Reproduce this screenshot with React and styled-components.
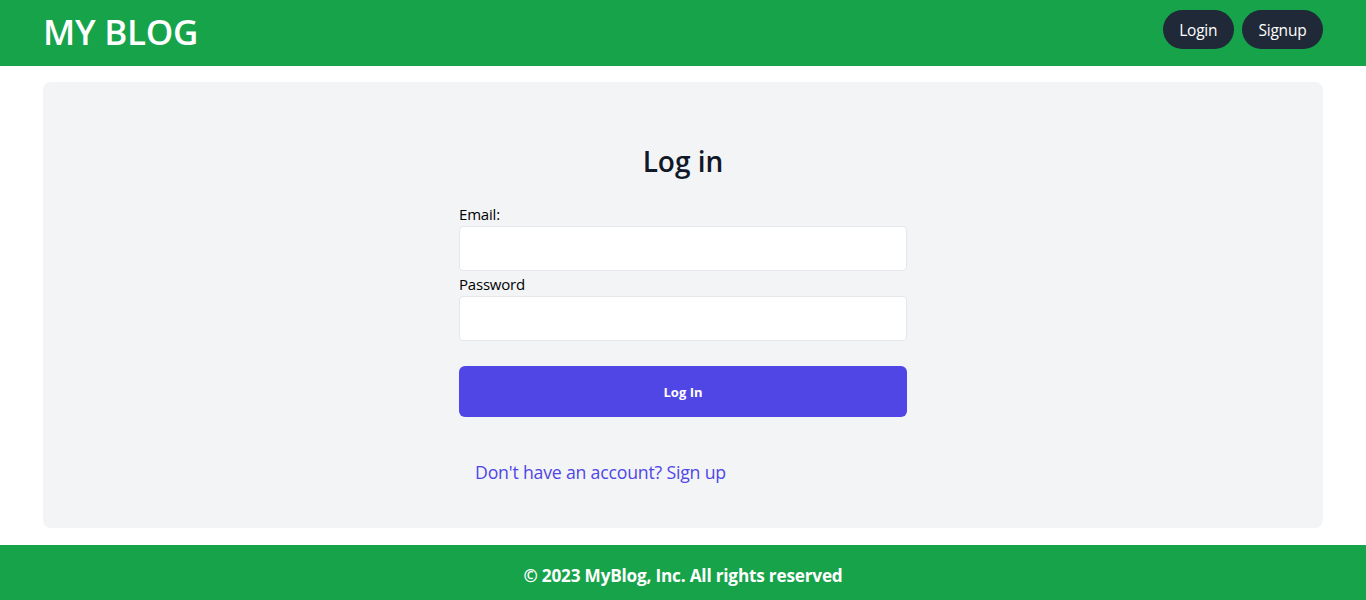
import React from "react";
import styled, { createGlobalStyle } from "styled-components";

const Global = createGlobalStyle`
  * { box-sizing: border-box; }
  html, body { margin: 0; padding: 0; background: #ffffff; }
  body { font-family: "Open Sans", "Noto Sans", sans-serif; color: #000; }
`;

const Page = styled.div`
  display: flex;
  flex-direction: column;
  min-height: 600px;
`;

const Header = styled.header`
  background: #16a34a;
  height: 66px;
  padding-top: 10px;
`;

const Container = styled.div`
  max-width: 1280px;
  margin: 0 auto;
  display: flex;
  align-items: flex-start;
  justify-content: space-between;
`;

const Brand = styled.h1`
  margin: 2px 0 0;
  color: #ffffff;
  font-size: 35px;
  font-weight: 600;
  letter-spacing: -0.3px;
  line-height: 39px;
`;

const Nav = styled.nav`
  display: flex;
  gap: 8px;
`;

const NavButton = styled.button`
  background: #1f2937;
  color: #ffffff;
  border: none;
  border-radius: 9999px;
  height: 39px;
  padding: 0 16.5px;
  font-family: inherit;
  font-size: 15.5px;
  letter-spacing: -0.2px;
  cursor: pointer;
`;

const Main = styled.main`
  width: 1280px;
  margin: 16px auto 17px;
`;

const Card = styled.section`
  background: #f3f4f6;
  border-radius: 8px;
  height: 446px;
  padding-top: 59px;
  display: flex;
  flex-direction: column;
  align-items: center;
`;

const Title = styled.h2`
  margin: 0;
  font-size: 28px;
  font-weight: 600;
  color: #111827;
  line-height: 40px;
`;

const Form = styled.form`
  width: 448px;
  margin-top: 25px;
  display: flex;
  flex-direction: column;
`;

const Label = styled.label`
  font-size: 15px;
  line-height: 16px;
  padding-bottom: 4px;
  color: #000;
  letter-spacing: -0.2px;
`;

const Input = styled.input`
  height: 45px;
  background: #ffffff;
  border: 1px solid #e5e7eb;
  border-radius: 4px;
  margin-bottom: ${(p) => (p.$last ? "25px" : "5px")};
  font-family: inherit;
  font-size: 16px;
  padding: 0 12px;
  outline: none;
`;

const Submit = styled.button`
  height: 51px;
  background: #4f46e5;
  color: #ffffff;
  border: none;
  border-radius: 6px;
  font-family: inherit;
  font-size: 13px;
  font-weight: 700;
  cursor: pointer;
`;

const SwitchLink = styled.a`
  margin-top: 43px;
  padding-left: 16px;
  color: #4f46e5;
  font-size: 17.7px;
  line-height: 24px;
  letter-spacing: -0.2px;
  text-decoration: none;
`;

const Footer = styled.footer`
  background: #16a34a;
  height: 56px;
  display: flex;
  align-items: center;
  justify-content: center;
  padding-top: 5px;
  color: #ffffff;
  font-size: 17.2px;
  font-weight: 700;
  letter-spacing: -0.2px;
`;

export default function App() {
  return (
    <>
      <Global />
      <Page>
        <Header>
          <Container>
            <Brand>MY BLOG</Brand>
            <Nav>
              <NavButton>Login</NavButton>
              <NavButton>Signup</NavButton>
            </Nav>
          </Container>
        </Header>
        <Main>
          <Card>
            <Title>Log in</Title>
            <Form onSubmit={(e) => e.preventDefault()}>
              <Label htmlFor="email">Email:</Label>
              <Input id="email" type="email" />
              <Label htmlFor="password">Password</Label>
              <Input id="password" type="password" $last />
              <Submit type="submit">Log In</Submit>
              <SwitchLink href="#">Don't have an account? Sign up</SwitchLink>
            </Form>
          </Card>
        </Main>
        <Footer>© 2023 MyBlog, Inc. All rights reserved</Footer>
      </Page>
    </>
  );
}
